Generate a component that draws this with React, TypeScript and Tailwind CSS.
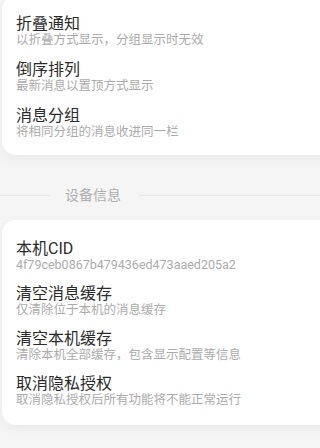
import React from "react";

type Item = { title: string; desc: string };

const displayItems: Item[] = [
  { title: "折叠通知", desc: "以折叠方式显示，分组显示时无效" },
  { title: "倒序排列", desc: "最新消息以置顶方式显示" },
  { title: "消息分组", desc: "将相同分组的消息收进同一栏" },
];

const deviceItems: Item[] = [
  { title: "本机CID", desc: "4f79ceb0867b479436ed473aaed205a2" },
  { title: "清空消息缓存", desc: "仅清除位于本机的消息缓存" },
  { title: "清空本机缓存", desc: "清除本机全部缓存，包含显示配置等信息" },
  { title: "取消隐私授权", desc: "取消隐私授权后所有功能将不能正常运行" },
];

function Row({ item }: { item: Item }) {
  return (
    <div className="flex flex-col">
      <div className="text-[16px] leading-[18px] text-[#2b2b2b] whitespace-nowrap">{item.title}</div>
      <div className="text-[12.5px] leading-[13px] text-[#ababab] whitespace-nowrap">{item.desc}</div>
    </div>
  );
}

export default function App() {
  return (
    <div
      className="h-[448px] w-full overflow-hidden bg-[#f5f5f5]"
      style={{ fontFamily: 'Roboto, "Noto Sans CJK SC", sans-serif' }}
    >
      {/* card runs past the right edge */}
      <div className="ml-[2px] mr-[-30px] mt-[-4px] flex flex-col gap-[15px] rounded-l-[14px] bg-white pb-[17px] pl-[14px] pt-[19px] shadow-[0_4px_12px_rgba(0,0,0,0.05)]">
        {displayItems.map((it) => (
          <Row key={it.title} item={it} />
        ))}
      </div>

      <div className="flex h-[65px] items-start pt-[32px]">
        <div className="mt-[8px] h-px w-[50px] bg-[#e6e6e6]" />
        <div className="ml-[15px] mr-[18px] text-[14px] leading-[16px] text-[#adadad]">设备信息</div>
        <div className="mt-[8px] h-px flex-1 bg-[#e6e6e6]" />
      </div>

      <div className="ml-[2px] mr-[-30px] flex flex-col gap-[14px] rounded-l-[14px] bg-white pb-[19px] pl-[14px] pt-[20px] shadow-[0_4px_12px_rgba(0,0,0,0.05)]">
        {deviceItems.map((it) => (
          <Row key={it.title} item={it} />
        ))}
      </div>
    </div>
  );
}
